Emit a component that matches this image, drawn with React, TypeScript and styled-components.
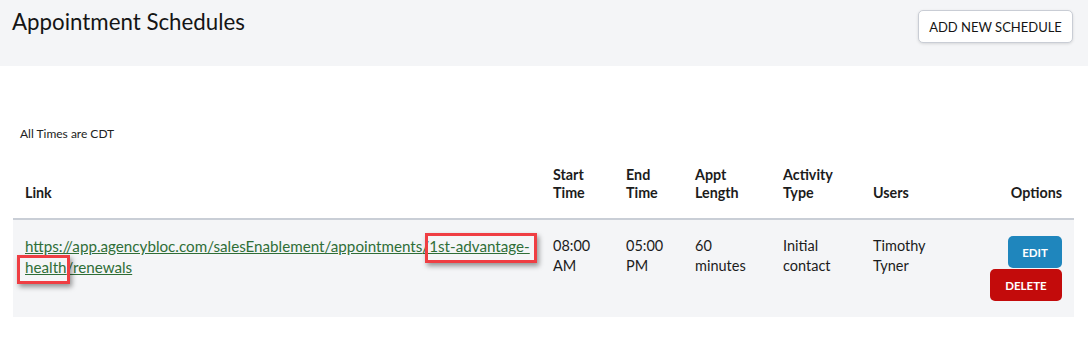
import React from "react";
import styled, { createGlobalStyle } from "styled-components";

const Global = createGlobalStyle`
  html, body { margin: 0; padding: 0; background: #fff; }
  body { font-family: Lato, "Open Sans", sans-serif; color: #1c1c1c; }
`;

const Header = styled.header`
  height: 66px;
  background: #f4f5f7;
  display: flex;
  justify-content: space-between;
  align-items: flex-start;
  padding: 10px 15px 0 12px;
  box-sizing: border-box;
`;

const Title = styled.h1`
  margin: 0;
  font-size: 22.3px;
  font-weight: 400;
  line-height: 24px;
  color: #151515;
`;

const AddButton = styled.button`
  font-family: inherit;
  height: 33px;
  width: 155px;
  background: #fff;
  border: 1px solid #c9cdd5;
  border-radius: 5px;
  box-shadow: 0 1px 3px rgba(0, 0, 0, 0.12);
  font-size: 13px;
  color: #151515;
  text-transform: uppercase;
  padding: 0;
`;

const Body = styled.main`
  padding: 61px 14px 0 13px;
`;

const Note = styled.div`
  font-size: 12px;
  padding-left: 7px;
  line-height: 14px;
  color: #222;
`;

const Table = styled.table`
  width: 100%;
  margin-top: 14px;
  border-collapse: collapse;
  table-layout: fixed;
`;

const Th = styled.th<{ $align?: string }>`
  text-align: ${(p) => p.$align || "left"};
  vertical-align: bottom;
  font-size: 14.3px;
  font-weight: 700;
  line-height: 18px;
  padding: 11px 12px 16px;
  border-bottom: 2px solid #c9ced6;
  color: #1c1c1c;
`;

const Row = styled.tr`
  background: #f4f5f7;
`;

const Td = styled.td<{ $align?: string; $nowrap?: boolean }>`
  vertical-align: top;
  text-align: ${(p) => p.$align || "left"};
  white-space: ${(p) => (p.$nowrap ? "nowrap" : "normal")};
  font-size: 14.5px;
  line-height: 20px;
  padding: 16px 12px;
  color: #1c1c1c;
`;

const LinkText = styled.a`
  color: #2f6e37;
  text-decoration: underline;
  font-size: 15.2px;
`;

const Marked = styled.span<{ $t: number; $r: number; $b: number; $l: number }>`
  position: relative;
  white-space: nowrap;
  &::after {
    content: "";
    position: absolute;
    top: ${(p) => p.$t}px;
    right: ${(p) => p.$r}px;
    bottom: ${(p) => p.$b}px;
    left: ${(p) => p.$l}px;
    border: 3px solid #ef3e43;
    box-shadow: 2px 3px 5px rgba(0, 0, 0, 0.4);
    pointer-events: none;
  }
`;

const Actions = styled.div`
  display: flex;
  flex-direction: column;
  align-items: flex-end;
`;

const ActionButton = styled.button<{ $bg: string; $w: number; $gap?: number }>`
  font-family: inherit;
  width: ${(p) => p.$w}px;
  height: 32px;
  border: none;
  border-radius: 5px;
  background: ${(p) => p.$bg};
  color: #fff;
  font-size: 11.5px;
  font-weight: 700;
  text-transform: uppercase;
  padding: 0;
  margin-top: ${(p) => p.$gap || 0}px;
`;

export default function App() {
  return (
    <>
      <Global />
      <Header>
        <Title>Appointment Schedules</Title>
        <AddButton>Add New Schedule</AddButton>
      </Header>
      <Body>
        <Note>All Times are CDT</Note>
        <Table>
          <colgroup>
            <col style={{ width: 528 }} />
            <col style={{ width: 73 }} />
            <col style={{ width: 69 }} />
            <col style={{ width: 88 }} />
            <col style={{ width: 90 }} />
            <col style={{ width: 100 }} />
            <col />
          </colgroup>
          <thead>
            <tr>
              <Th>Link</Th>
              <Th>Start Time</Th>
              <Th>End Time</Th>
              <Th>Appt Length</Th>
              <Th>Activity Type</Th>
              <Th>Users</Th>
              <Th $align="right">Options</Th>
            </tr>
          </thead>
          <tbody>
            <Row>
              <Td $nowrap>
                <LinkText href="#">
                  https://app.agencybloc.com/salesEnablement/appointments
                  <Marked $t={-4} $r={-7} $b={-8} $l={3}>/1st-advantage-</Marked>
                  <br />
                  <Marked $t={-3} $r={-3} $b={-8} $l={-8}>health</Marked>/renewals
                </LinkText>
              </Td>
              <Td>08:00 AM</Td>
              <Td>05:00 PM</Td>
              <Td>60 minutes</Td>
              <Td>Initial contact</Td>
              <Td>Timothy Tyner</Td>
              <Td $align="right">
                <Actions>
                  <ActionButton $bg="#1f86bd" $w={54}>Edit</ActionButton>
                  <ActionButton $bg="#c30b0b" $w={72} $gap={1}>Delete</ActionButton>
                </Actions>
              </Td>
            </Row>
          </tbody>
        </Table>
      </Body>
    </>
  );
}
